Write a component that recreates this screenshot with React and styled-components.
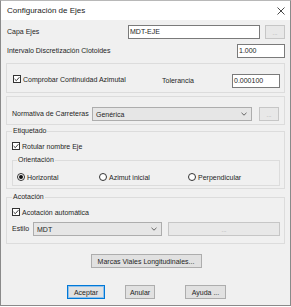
import React from 'react';
import styled, { createGlobalStyle } from 'styled-components';

const GlobalStyle = createGlobalStyle`
  html, body {
    margin: 0;
    padding: 0;
    background: #ffffff;
  }
  * {
    box-sizing: border-box;
  }
`;

const Window = styled.div`
  width: 291px;
  height: 306px;
  border: 1px solid #8a8a8a;
  border-top-color: #b8b8b8;
  background: #f0f0f0;
  display: flex;
  flex-direction: column;
  font-family: "Liberation Sans", Arial, sans-serif;
  font-size: 7px;
  color: #1e1e1e;
  overflow: hidden;
`;

const TitleBar = styled.div`
  height: 19px;
  background: #ffffff;
  display: flex;
  align-items: center;
  justify-content: space-between;
  padding: 0 5px 0 6px;
`;

const Title = styled.span`
  font-size: 8px;
  color: #222;
`;

const Body = styled.div`
  padding: 5px 5px 0 5px;
  display: flex;
  flex-direction: column;
`;

const Row = styled.div`
  display: flex;
  align-items: center;
  height: 14px;
  margin-top: ${(p) => p.$mt || 0}px;
`;

const Label = styled.span`
  flex: ${(p) => (p.$grow ? 1 : '0 0 auto')};
  padding-left: ${(p) => p.$pl || 0}px;
  width: ${(p) => (p.$w ? `${p.$w}px` : 'auto')};
  white-space: nowrap;
  line-height: 10px;
`;

const TextBox = styled.div`
  width: ${(p) => p.$w}px;
  height: 14px;
  background: #fff;
  border: 1px solid #7a7a7a;
  padding-left: 1px;
  line-height: 12px;
  margin-right: ${(p) => p.$mr || 0}px;
`;

const SmallButton = styled.div`
  width: ${(p) => p.$w}px;
  height: 14px;
  background: #e8e8e8;
  border: 1px solid #c6c6c6;
  color: #a3a3a3;
  display: flex;
  align-items: center;
  justify-content: center;
  font-size: 6px;
  padding-top: 1px;
`;

const Combo = styled.div`
  width: ${(p) => p.$w}px;
  height: 14px;
  background: #e6e6e6;
  border: 1px solid #adadad;
  display: flex;
  align-items: center;
  justify-content: space-between;
  padding: 0 4px 0 3px;
  margin-right: ${(p) => p.$mr || 0}px;
`;

const Panel = styled.div`
  border: 1px solid #dcdcdc;
  margin-top: ${(p) => p.$mt || 0}px;
  padding: ${(p) => p.$pad};
`;

const Group = styled.fieldset`
  border: 1px solid #dcdcdc;
  margin: ${(p) => p.$mt || 0}px 0 0 0;
  padding: ${(p) => p.$pad};
  min-width: 0;
`;

const Legend = styled.legend`
  padding: 0 1px;
  margin-left: ${(p) => p.$ml || 0}px;
  line-height: 8px;
  font-size: 7px;
  color: #1e1e1e;
`;

const CheckRow = styled.label`
  display: flex;
  align-items: center;
  height: 10px;
  gap: 2px;
  margin-top: ${(p) => p.$mt || 0}px;
  width: ${(p) => (p.$w ? `${p.$w}px` : 'auto')};
  flex: 0 0 auto;
  align-self: ${(p) => p.$self || 'auto'};
`;

const Box = styled.span`
  width: 8px;
  height: 8px;
  border: 1px solid #333;
  background: #fff;
  display: inline-flex;
  align-items: center;
  justify-content: center;
`;

const RadioRow = styled.div`
  display: flex;
  align-items: center;
  height: 10px;
  margin-top: ${(p) => p.$mt || 0}px;
`;

const RadioItem = styled.label`
  display: flex;
  align-items: center;
  gap: 2px;
  width: ${(p) => p.$w}px;
`;

const Circle = styled.span`
  width: 8px;
  height: 8px;
  border-radius: 50%;
  border: 1px solid #333;
  background: #fff;
  display: inline-flex;
  align-items: center;
  justify-content: center;

  &::after {
    content: '';
    width: 4px;
    height: 4px;
    border-radius: 50%;
    background: ${(p) => (p.$on ? '#111' : 'transparent')};
  }
`;

const Button = styled.div`
  width: ${(p) => p.$w}px;
  height: 14px;
  margin-left: ${(p) => p.$ml || 0}px;
  background: #e1e1e1;
  border: 1px solid ${(p) => (p.$focus ? '#0078d7' : '#adadad')};
  box-shadow: ${(p) => (p.$focus ? 'inset 0 0 0 1px #8fc1ec' : 'none')};
  display: flex;
  align-items: center;
  justify-content: center;
  white-space: nowrap;
`;

const Center = styled.div`
  display: flex;
  justify-content: center;
  margin-top: ${(p) => p.$mt || 0}px;
  padding-left: ${(p) => p.$pl || 0}px;
`;

const ButtonBar = styled.div`
  display: flex;
  margin-top: ${(p) => p.$mt || 0}px;
  padding-left: ${(p) => p.$pl || 0}px;
`;

const Check = ({ on }) => (
  <Box>
    {on && (
      <svg width="6" height="6" viewBox="0 0 6 6">
        <path d="M0.6 3 L2.3 4.7 L5.4 1.2" fill="none" stroke="#222" strokeWidth="0.9" />
      </svg>
    )}
  </Box>
);

const Chevron = () => (
  <svg width="6" height="4" viewBox="0 0 6 4">
    <path d="M0.5 0.8 L3 3.2 L5.5 0.8" fill="none" stroke="#555" strokeWidth="0.9" />
  </svg>
);

const CloseIcon = () => (
  <svg width="8" height="8" viewBox="0 0 8 8">
    <path d="M0.5 0.5 L7.5 7.5 M7.5 0.5 L0.5 7.5" stroke="#333" strokeWidth="0.9" />
  </svg>
);

export default function App() {
  return (
    <>
      <GlobalStyle />
      <Window>
        <TitleBar>
          <Title>Configuración de Ejes</Title>
          <CloseIcon />
        </TitleBar>
        <Body>
          <Row>
            <Label $grow $pl={1}>Capa Ejes</Label>
            <TextBox $w={132} $mr={5}>MDT-EJE</TextBox>
            <SmallButton $w={20}>...</SmallButton>
          </Row>
          <Row $mt={5}>
            <Label $grow $pl={1}>Intervalo Discretización Clotoides</Label>
            <TextBox $w={48}>1.000</TextBox>
          </Row>

          <Panel $mt={5} $pad="10px 4px 4px 6px">
            <Row>
              <CheckRow $w={149} $self="flex-start">
                <Check on />
                Comprobar Continuidad Azimutal
              </CheckRow>
              <Label $grow>Tolerancia</Label>
              <TextBox $w={48}>0.000100</TextBox>
            </Row>
          </Panel>

          <Panel $mt={3} $pad="10px 5px 3px 5px">
            <Row>
              <Label $grow>Normativa de Carreteras</Label>
              <Combo $w={160} $mr={7}>
                Genérica
                <Chevron />
              </Combo>
              <SmallButton $w={20}>...</SmallButton>
            </Row>
          </Panel>

          <Group $mt={2} $pad="0 4px 2px 5px">
            <Legend>Etiquetado</Legend>
            <CheckRow $mt={6}>
              <Check on />
              Rotular nombre Eje
            </CheckRow>
            <Group $mt={5} $pad="0 4px 3px 4px">
              <Legend>Orientación</Legend>
              <RadioRow $mt={8}>
                <RadioItem $w={82}>
                  <Circle $on />
                  Horizontal
                </RadioItem>
                <RadioItem $w={89}>
                  <Circle />
                  Azimut inicial
                </RadioItem>
                <RadioItem $w={80}>
                  <Circle />
                  Perpendicular
                </RadioItem>
              </RadioRow>
            </Group>
          </Group>

          <Group $mt={4} $pad="0 4px 7px 5px">
            <Legend>Acotación</Legend>
            <CheckRow $mt={6}>
              <Check on />
              Acotación automática
            </CheckRow>
            <Row $mt={5}>
              <Label $w={21}>Estilo</Label>
              <Combo $w={129} $mr={6}>
                MDT
                <Chevron />
              </Combo>
              <SmallButton $w={112}>...</SmallButton>
            </Row>
          </Group>

          <Center $mt={10} $pl={1}>
            <Button $w={111}>Marcas Viales Longitudinales...</Button>
          </Center>

          <ButtonBar $mt={17} $pl={61}>
            <Button $w={38} $focus>Aceptar</Button>
            <Button $w={30} $ml={20}>Anular</Button>
            <Button $w={41} $ml={30}>Ayuda ...</Button>
          </ButtonBar>
        </Body>
      </Window>
    </>
  );
}
